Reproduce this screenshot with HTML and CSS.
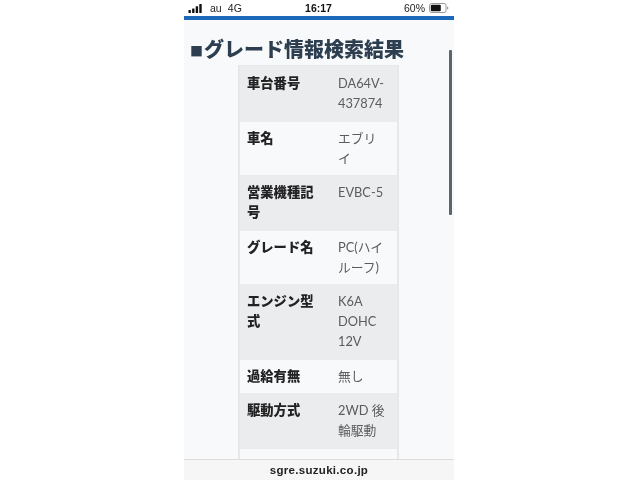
FILE: index.html
```html
<!DOCTYPE html>
<html lang="ja">
<head>
<meta charset="utf-8">
<title>グレード情報検索結果</title>
<link rel="stylesheet" href="styles.css">
</head>
<body>
<div class="phone">
  <div class="status">
    <div class="status-left">
      <svg class="signal" width="17" height="9" viewBox="0 0 16 9"><rect x="0" y="6" width="2.4" height="3" rx=".5"/><rect x="3.6" y="4.5" width="2.4" height="4.5" rx=".5"/><rect x="7.2" y="2.2" width="2.4" height="6.8" rx=".5"/><rect x="10.8" y="0" width="2.4" height="9" rx=".5"/></svg>
      <span>au</span><span class="net">4G</span>
    </div>
    <div class="status-time">16:17</div>
    <div class="status-right">
      <span>60%</span>
      <svg class="battery" width="20" height="10" viewBox="0 0 20 10"><rect x=".5" y=".5" width="16.5" height="9" rx="2" fill="none" stroke="#9a9a9a"/><rect x="1.8" y="1.8" width="10" height="6.4" rx="1" fill="#111"/><path d="M18 3.4c1 .3 1.4 .9 1.4 1.6s-.4 1.3-1.4 1.6z" fill="#9a9a9a"/></svg>
    </div>
  </div>
  <div class="blue-bar"></div>
  <main class="content">
    <h1 class="title"><span class="square">■</span>グレード情報検索結果</h1>
    <div class="table">
      <div class="row shade"><div class="key">車台番号</div><div class="val">DA64V-437874</div></div>
      <div class="row"><div class="key">車名</div><div class="val">エブリイ</div></div>
      <div class="row shade"><div class="key">営業機種記号</div><div class="val">EVBC-5</div></div>
      <div class="row"><div class="key">グレード名</div><div class="val">PC(ハイルーフ)</div></div>
      <div class="row shade"><div class="key">エンジン型式</div><div class="val">K6A DOHC 12V</div></div>
      <div class="row"><div class="key">過給有無</div><div class="val">無し</div></div>
      <div class="row shade"><div class="key">駆動方式</div><div class="val">2WD 後輪駆動</div></div>
      <div class="row last"></div>
    </div>
    <div class="scrollbar"></div>
  </main>
  <footer class="url">sgre.suzuki.co.jp</footer>
</div>
</body>
</html>
```
FILE: styles.css
```css
* { box-sizing: border-box; }
html, body { margin: 0; height: 100%; background: #fff; }
body { display: flex; justify-content: center; overflow: hidden; font-family: "Noto Sans CJK JP", sans-serif; }
.phone { width: 270px; height: 480px; margin-left: -2px; display: flex; flex-direction: column; background: #f8f9fb; filter: blur(.35px); }
.status { height: 16px; flex: none; background: #fff; display: grid; grid-template-columns: 1fr auto 1fr; align-items: center; padding: 0 5px 0 4px; font: 10.5px/16px "Liberation Sans", sans-serif; color: #222; }
.status-left { display: flex; align-items: center; gap: 5px; }
.net { margin-left: 1px; letter-spacing: .3px; }
.signal { fill: #111; margin-right: 0; }
.status-time { font-weight: 700; color: #111; }
.status-right { display: flex; justify-content: flex-end; align-items: center; gap: 4px; }
.blue-bar { height: 4px; flex: none; background: #1c69b9; }
.content { flex: 1; min-height: 0; position: relative; overflow: hidden; padding: 0 0 0 6px; }
.title { margin: 14px 0 0; height: 31px; font-size: 20px; line-height: 29px; font-weight: 900; color: #2c3e50; white-space: nowrap; }
.square { font-size: 13px; vertical-align: 1px; margin-right: 1px; }
.table { width: 161px; margin: 0 0 0 48px; border: solid #e6e8ea; border-width: 1px 2px 0; }
.row { display: grid; grid-template-columns: 78px 49px; column-gap: 13px; padding: 6px 7px 7px; background: #f8f9fb; line-height: 20px; }
.row.shade { background: #ebecee; padding: 7px 7px 9px; }
.row.last { height: 30px; }
.key { font-size: 13.3px; font-weight: 900; color: #222; }
.val { font-family: Lato, "Noto Sans CJK JP", sans-serif; font-size: 12.8px; color: #5c5c5c; }
.scrollbar { position: absolute; left: 265px; top: 30px; width: 3px; height: 165px; background: #5f6468; border-radius: 1px; }
.url { height: 21px; flex: none; background: #f6f6f6; border-top: 1px solid #dcdcdc; text-align: center; font: 700 11.5px/20px "Liberation Sans", sans-serif; letter-spacing: .3px; color: #222; }
```
